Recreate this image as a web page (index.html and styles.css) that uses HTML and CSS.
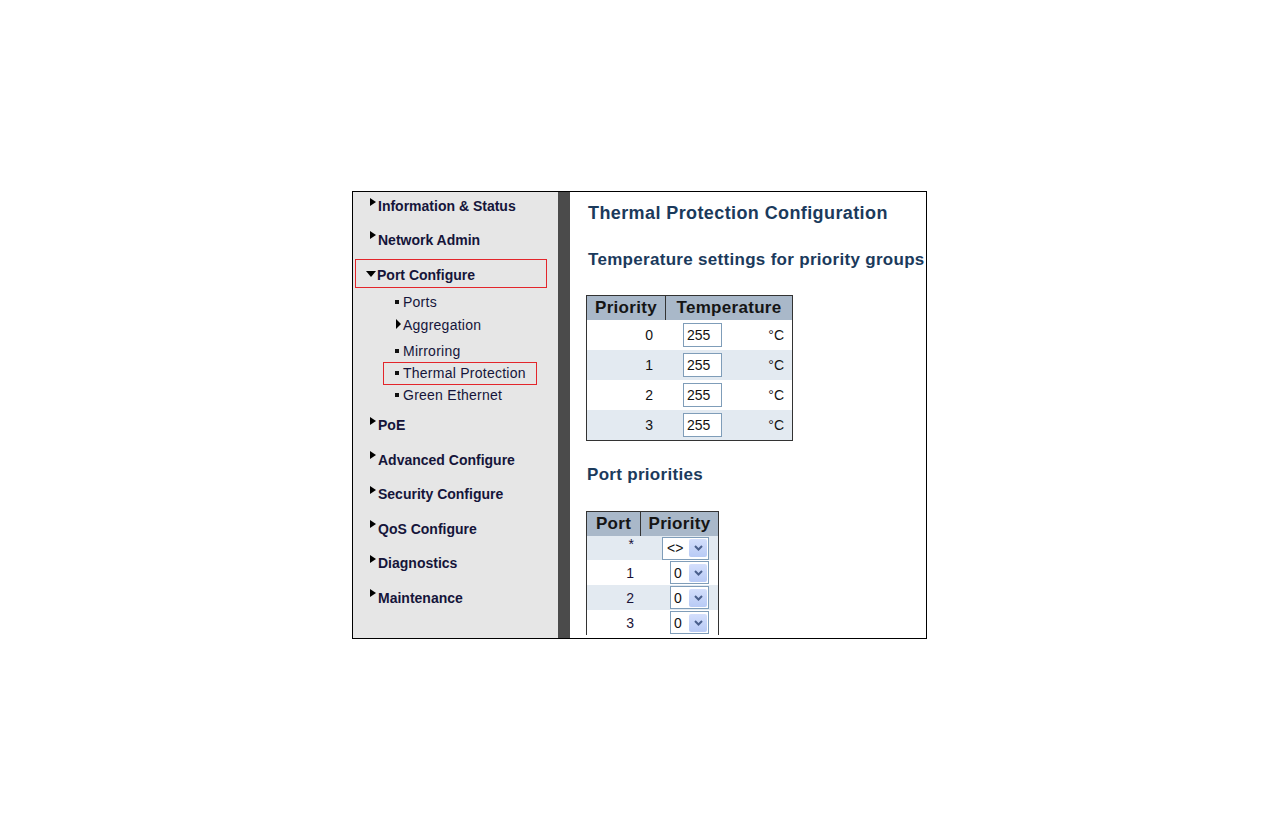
FILE: index.html
```html
<!DOCTYPE html>
<html>
<head>
<meta charset="utf-8">
<title>Thermal Protection Configuration</title>
<link rel="stylesheet" href="styles.css">
</head>
<body>
<div class="frame">
  <nav class="menu">
    <div class="mi mi-first"><span class="tri"></span>Information &amp; Status</div>
    <div class="mi mi-net"><span class="tri"></span>Network Admin</div>
    <div class="mi-open"><span class="tri-down"></span>Port Configure</div>
    <div class="submenu">
      <div class="si si-ports"><span class="sq"></span>Ports</div>
      <div class="si si-agg"><span class="tri-sm"></span>Aggregation</div>
      <div class="si si-mirror"><span class="sq"></span>Mirroring</div>
      <div class="si si-active"><span class="sq"></span>Thermal Protection</div>
      <div class="si si-green"><span class="sq"></span>Green Ethernet</div>
    </div>
    <div class="mi mi-after"><span class="tri"></span>PoE</div>
    <div class="mi"><span class="tri"></span>Advanced Configure</div>
    <div class="mi"><span class="tri"></span>Security Configure</div>
    <div class="mi"><span class="tri"></span>QoS Configure</div>
    <div class="mi"><span class="tri"></span>Diagnostics</div>
    <div class="mi"><span class="tri"></span>Maintenance</div>
  </nav>
  <div class="divider"></div>
  <main class="content">
    <h1 class="title">Thermal Protection Configuration</h1>
    <h2 class="subtitle">Temperature settings for priority groups</h2>
    <table class="grid temp">
      <tr><th class="c1">Priority</th><th>Temperature</th></tr>
      <tr><td class="num">0</td><td><div class="tbox"><input class="tin" type="text" value="255"><span class="unit">°C</span></div></td></tr>
      <tr class="alt"><td class="num">1</td><td><div class="tbox"><input class="tin" type="text" value="255"><span class="unit">°C</span></div></td></tr>
      <tr><td class="num">2</td><td><div class="tbox"><input class="tin" type="text" value="255"><span class="unit">°C</span></div></td></tr>
      <tr class="alt"><td class="num">3</td><td><div class="tbox"><input class="tin" type="text" value="255"><span class="unit">°C</span></div></td></tr>
    </table>
    <h2 class="subtitle2">Port priorities</h2>
    <table class="grid ports">
      <tr><th class="c1">Port</th><th>Priority</th></tr>
      <tr class="alt star"><td class="pnum">*</td><td class="psel"><span class="sel wide"><span class="val">&lt;&gt;</span><span class="btn"><svg width="9" height="6" viewBox="0 0 9 6"><path d="M1 1 L4.5 4.5 L8 1" stroke="#4a5f8c" stroke-width="2" fill="none"/></svg></span></span></td></tr>
      <tr><td class="pnum">1</td><td class="psel"><span class="sel"><span class="val">0</span><span class="btn"><svg width="9" height="6" viewBox="0 0 9 6"><path d="M1 1 L4.5 4.5 L8 1" stroke="#4a5f8c" stroke-width="2" fill="none"/></svg></span></span></td></tr>
      <tr class="alt"><td class="pnum">2</td><td class="psel"><span class="sel"><span class="val">0</span><span class="btn"><svg width="9" height="6" viewBox="0 0 9 6"><path d="M1 1 L4.5 4.5 L8 1" stroke="#4a5f8c" stroke-width="2" fill="none"/></svg></span></span></td></tr>
      <tr><td class="pnum">3</td><td class="psel"><span class="sel"><span class="val">0</span><span class="btn"><svg width="9" height="6" viewBox="0 0 9 6"><path d="M1 1 L4.5 4.5 L8 1" stroke="#4a5f8c" stroke-width="2" fill="none"/></svg></span></span></td></tr>
    </table>
  </main>
</div>
</body>
</html>
```

FILE: styles.css
```css
body {
  margin: 0;
  background: #ffffff;
  font-family: "Liberation Sans", Arial, sans-serif;
}

.frame {
  margin: 191px 0 0 352px;
  width: 575px;
  height: 448px;
  box-sizing: border-box;
  border: 1px solid #000000;
  display: flex;
  overflow: hidden;
}

/* ---------- left menu ---------- */
.menu {
  width: 205px;
  flex: none;
  background: #e6e6e6;
  padding-top: 4px;
  box-sizing: border-box;
  color: #15153a;
  font-size: 14px;
}

.mi {
  height: 20px;
  line-height: 20px;
  margin-bottom: 14.5px;
  padding-left: 17px;
  font-weight: bold;
  white-space: nowrap;
}

.mi-first {
  margin-bottom: 13.5px;
}

.mi-net {
  margin-bottom: 9px;
}

.mi-after {
  margin-top: 10.2px;
}

.tri {
  display: inline-block;
  width: 0;
  height: 0;
  border-left: 6px solid #000;
  border-top: 4px solid transparent;
  border-bottom: 4px solid transparent;
  margin-right: 2px;
  margin-bottom: 5.5px;
  vertical-align: baseline;
}

.mi-open {
  margin-left: 2px;
  width: 192px;
  box-sizing: border-box;
  border: 1px solid #e3262b;
  padding: 5.5px 0 1.5px 10px;
  line-height: 20px;
  font-weight: bold;
  white-space: nowrap;
}

.tri-down {
  display: inline-block;
  width: 0;
  height: 0;
  border-top: 6px solid #000;
  border-left: 5.5px solid transparent;
  border-right: 5.5px solid transparent;
  margin-right: 1px;
  margin-bottom: 3px;
  vertical-align: baseline;
}

.submenu {
  margin-top: 4px;
}

.si {
  line-height: 20px;
  padding-left: 42px;
  letter-spacing: 0.25px;
  white-space: nowrap;
  box-sizing: border-box;
}

.si-ports { height: 23px; }
.si-agg { height: 26px; }
.si-mirror { height: 21px; }

.si-active {
  margin-left: 30px;
  width: 154px;
  border: 1px solid #e3262b;
  padding-left: 11px;
  padding-bottom: 1.5px;
}

.si-green {
  margin-top: 0;
  height: 20px;
}

.sq {
  display: inline-block;
  width: 4px;
  height: 4px;
  background: #111;
  margin-right: 4px;
  margin-bottom: 3px;
  vertical-align: baseline;
}

.tri-sm {
  display: inline-block;
  width: 0;
  height: 0;
  border-left: 5px solid #000;
  border-top: 5px solid transparent;
  border-bottom: 5px solid transparent;
  margin-left: 1px;
  margin-right: 2px;
  margin-bottom: 0.5px;
  vertical-align: baseline;
}

.divider {
  width: 12px;
  flex: none;
  background: #4b4b4b;
}

/* ---------- content ---------- */
.content {
  flex: 1;
  min-width: 0;
  overflow: hidden;
  padding-left: 18px;
  background: #ffffff;
}

.title {
  margin: 9px 0 0;
  font-size: 18px;
  line-height: 24px;
  letter-spacing: 0.4px;
  font-weight: bold;
  color: #1b3a5c;
  white-space: nowrap;
}

.subtitle {
  margin: 22.5px 0 0;
  font-size: 17px;
  line-height: 24px;
  letter-spacing: 0.3px;
  font-weight: bold;
  color: #1b3a5c;
  white-space: nowrap;
}

.subtitle2 {
  margin: 22px 0 0 -1px;
  font-size: 17px;
  line-height: 24px;
  letter-spacing: 0.3px;
  font-weight: bold;
  color: #1b3a5c;
  white-space: nowrap;
}

.grid {
  border-collapse: separate;
  border-spacing: 0;
  border: 1px solid #333333;
  table-layout: fixed;
  margin-left: -2px;
  color: #111111;
}

.grid th {
  background: #a9b8c9;
  font-size: 17px;
  letter-spacing: 0.3px;
  font-weight: bold;
  height: 24px;
  padding: 0;
  text-align: center;
  color: #151515;
  white-space: nowrap;
}

.grid th.c1 {
  border-right: 1px solid #333333;
  box-sizing: border-box;
}

.grid td {
  padding: 0;
  font-size: 14px;
  background: #ffffff;
}

.grid tr.alt td {
  background: #e3eaf1;
}

.temp {
  width: 207px;
  margin-top: 23.5px;
}

.temp th.c1 {
  width: 79px;
}

.temp td {
  height: 30px;
}

.num {
  text-align: right;
  padding-right: 13px !important;
}

.tbox {
  display: flex;
  align-items: center;
}

.tin {
  width: 39px;
  height: 24px;
  box-sizing: border-box;
  margin: 0 0 0 17px;
  padding: 0 0 0 3px;
  border: 1px solid #7f9db9;
  font-family: "Liberation Sans", Arial, sans-serif;
  font-size: 14px;
  color: #111;
  background: #fff;
}

.unit {
  margin-left: auto;
  padding-right: 8px;
}

.ports {
  width: 133px;
  margin-top: 24px;
  border-bottom: none;
}

.ports th.c1 {
  width: 54px;
}

.ports td {
  height: 25px;
}

.ports tr.star td {
  height: 24px;
}

.pnum {
  text-align: right;
  padding-right: 7px !important;
  color: #1a1238;
}

.star .pnum {
  vertical-align: top;
  line-height: 16px;
}

.psel {
  text-align: right;
  padding-right: 9px !important;
}

.sel {
  display: inline-flex;
  align-items: center;
  box-sizing: border-box;
  width: 39px;
  height: 23px;
  border: 1px solid #7f9db9;
  background: #ffffff;
  vertical-align: middle;
}

.sel.wide {
  width: 47px;
}

.sel .val {
  flex: 1;
  text-align: left;
  padding-left: 3px;
  font-size: 14px;
  color: #111;
}

.sel.wide .val {
  padding-left: 4px;
}

.btn {
  width: 18px;
  height: 18px;
  margin-right: 1px;
  border-radius: 2px;
  background: linear-gradient(#d4dffc, #b8caf5);
  display: flex;
  align-items: center;
  justify-content: center;
}
```
